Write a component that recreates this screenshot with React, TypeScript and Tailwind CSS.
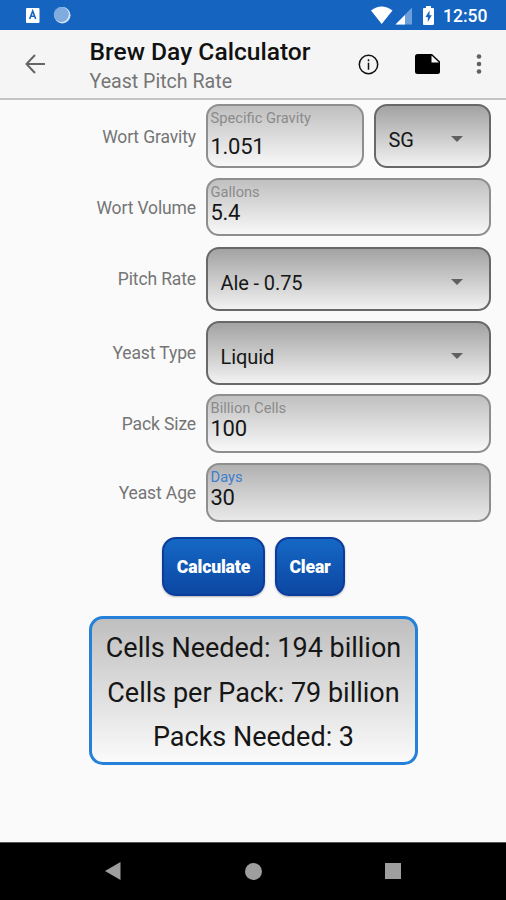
import type { ReactNode } from "react";

function Label({ children }: { children: ReactNode }) {
  return (
    <div className="w-[196px] shrink-0 pt-px text-right text-[17.5px] leading-5 tracking-[-0.12px] text-[#757575]">
      {children}
    </div>
  );
}

type FieldProps = { hint: string; value: string; className: string; focused?: boolean; tall?: boolean };

function Field({ hint, value, className, focused, tall }: FieldProps) {
  const fill = focused ? "from-[#b0b0b0] to-[#ebebeb]" : "from-[#bebebe] to-[#fafafa]";
  return (
    <div className={`rounded-[13px] border-[2.5px] border-[#8e8e8e] bg-linear-to-b bg-origin-border pl-[2.5px] ${fill} ${className}`}>
      <div className={`pt-[4px] text-[14.7px] leading-4 ${focused ? "text-[#3f7dd0]" : "text-[#8b8b8b]"}`}>{hint}</div>
      <div className={`text-[22px] leading-6 tracking-[-0.3px] text-[#161616] ${tall ? "mt-[9px]" : "mt-px"}`}>{value}</div>
    </div>
  );
}

function Picker({ value, className }: { value: string; className: string }) {
  return (
    <div className={`flex h-[64px] items-center justify-between rounded-[13px] border-[2.5px] border-[#686868] bg-linear-to-b from-[#a0a0a0] to-[#f5f5f5] bg-origin-border pt-[6px] pl-[12.5px] ${className}`}>
      <span className="pt-[2px] text-[20px] leading-6 tracking-[-0.1px] text-[#161616]">{value}</span>
      <svg className="mr-[26px] h-[6px] w-[12px]" viewBox="0 0 12 6">
        <path d="M0 0h12L6 6z" fill="#606060" />
      </svg>
    </div>
  );
}

function Row({ label, children, className }: { label: string; children: ReactNode; className: string }) {
  return (
    <div className={`flex items-center gap-[10px] ${className}`}>
      <Label>{label}</Label>
      {children}
    </div>
  );
}

function StatusBar() {
  return (
    <div className="flex h-[30px] items-center bg-[#1565c0] text-white">
      <svg className="h-[30px] w-[90px]" viewBox="0 0 90 30">
        <rect x="26" y="8" width="13.5" height="15" rx="1" fill="#fff" />
        <path d="M29.7 19l3-8 3 8M30.8 16.3h3.8" fill="none" stroke="#1565c0" strokeWidth="1.6" />
        <circle cx="62.3" cy="15.3" r="8.2" fill="#d3e4f7" />
        <circle cx="61.3" cy="14.5" r="7.5" fill="#7fabdf" />
      </svg>
      <svg className="ml-[281px] h-[30px] w-[65px]" viewBox="371 0 65 30">
        <path d="M371 10.5Q381.500 2.500 392.500 10.500L381.700 24z" fill="#fff" />
        <path d="M412 7.500V24.500H395.500z" fill="#6d9fdb" />
        <path d="M405 15V24.500H395.500z" fill="#fff" />
        <path d="M426 6h5v2h2q1 0 1 1v15q0 1-1 1h-9q-1 0-1-1V9q0-1 1-1h2z" fill="#fff" />
        <path d="M429.500 10.500l-4 6.500h2.300v5l4-6.700h-2.300z" fill="#1565c0" />
      </svg>
      <span className="ml-[7px] pt-[2px] text-[17.5px] leading-5 font-medium">12:50</span>
    </div>
  );
}

function AppBar() {
  return (
    <div className="flex h-[70px] items-center border-b-2 border-[#c4c4c4] bg-[#f5f5f5]">
      <svg className="ml-[25px] h-5 w-5" viewBox="0 0 20 20" fill="none" stroke="#666" strokeWidth="2">
        <path d="M20 10H2M10 1L1.500 10l8.500 9" />
      </svg>
      <div className="ml-[44.5px] w-[267.5px] pt-[5px]">
        <div className="text-[24.6px] leading-7 font-medium text-[#111]">Brew Day Calculator</div>
        <div className="pt-[2px] text-[19.6px] leading-7 text-[#757575]">Yeast Pitch Rate</div>
      </div>
      <svg className="h-[22px] w-[22px]" viewBox="0 0 22 22" fill="none" stroke="#111">
        <circle cx="11.500" cy="11.500" r="9.200" strokeWidth="1.500" />
        <path d="M11.500 9.700v7M11.500 6.300v2" strokeWidth="1.500" />
      </svg>
      <svg className="ml-[36px] h-5 w-[25px]" viewBox="0 0 25 20">
        <path d="M2.500 0H17l8 7.500v10q0 2.500-2.500 2.500h-20Q0 20 0 17.500v-15Q0 0 2.500 0z" fill="#000" />
        <path d="M16.500 1.500v7H24z" fill="#f5f5f5" />
      </svg>
      <svg className="ml-[36px] h-5 w-[6px]" viewBox="0 0 6 20" fill="#606060">
        <circle cx="3" cy="2.500" r="2.300" />
        <circle cx="3" cy="10" r="2.300" />
        <circle cx="3" cy="17.500" r="2.300" />
      </svg>
    </div>
  );
}

function ActionButton({ children, className }: { children: ReactNode; className: string }) {
  return (
    <button className={`h-[59px] rounded-[14px] border-2 border-[#0b3c9c] bg-linear-to-b from-[#1669c6] to-[#0c46a2] bg-origin-border pt-[2px] text-[17.6px] font-black tracking-[-0.15px] text-white shadow-[0_1px_2px_rgba(0,0,0,0.3)] ${className}`}>
      {children}
    </button>
  );
}

export default function App() {
  return (
    <div className="flex h-[900px] w-[506px] flex-col overflow-hidden bg-[#fafafa] font-[Roboto,sans-serif]">
      <StatusBar />
      <AppBar />
      <main className="flex-1 pt-[4px]">
        <Row label="Wort Gravity" className="h-[64px]">
          <Field hint="Specific Gravity" value="1.051" tall className="h-[64px] w-[158px]" />
          <Picker value="SG" className="w-[117px]" />
        </Row>
        <Row label="Wort Volume" className="mt-[10px] h-[58px]">
          <Field hint="Gallons" value="5.4" className="h-[58px] w-[285px]" />
        </Row>
        <Row label="Pitch Rate" className="mt-[11px] h-[63px]">
          <Picker value="Ale - 0.75" className="w-[285px]" />
        </Row>
        <Row label="Yeast Type" className="mt-[11px] h-[63px]">
          <Picker value="Liquid" className="w-[285px]" />
        </Row>
        <Row label="Pack Size" className="mt-[10px] h-[59px]">
          <Field hint="Billion Cells" value="100" className="h-[59px] w-[285px]" />
        </Row>
        <Row label="Yeast Age" className="mt-[10px] h-[59px]">
          <Field hint="Days" value="30" focused className="h-[59px] w-[285px]" />
        </Row>
        <div className="mt-[15px] ml-[162px] flex gap-[10px]">
          <ActionButton className="w-[103px]">Calculate</ActionButton>
          <ActionButton className="w-[70px]">Clear</ActionButton>
        </div>
        <div className="mt-[20px] ml-[89px] h-[149px] w-[329px] rounded-[14px] border-[3px] border-[#2480d8] bg-linear-to-b from-[#bebebe] to-[#fcfcfc] bg-origin-border pt-[7px] text-center text-[27px] leading-[44.500px] whitespace-nowrap text-[#161616]">
          <div>Cells Needed: 194 billion</div>
          <div>Cells per Pack: 79 billion</div>
          <div>Packs Needed: 3</div>
        </div>
      </main>
      <nav className="flex h-[58px] items-center border-t border-[#555] bg-black pb-px">
        <svg className="ml-[105px] h-[18px] w-[16px]" viewBox="0 0 16 18"><path d="M0 9L15.500 0v18z" fill="#9e9e9e" /></svg>
        <div className="ml-[124px] size-[17px] rounded-full bg-[#9e9e9e]" />
        <div className="ml-[123px] size-[16px] bg-[#9e9e9e]" />
      </nav>
    </div>
  );
}
